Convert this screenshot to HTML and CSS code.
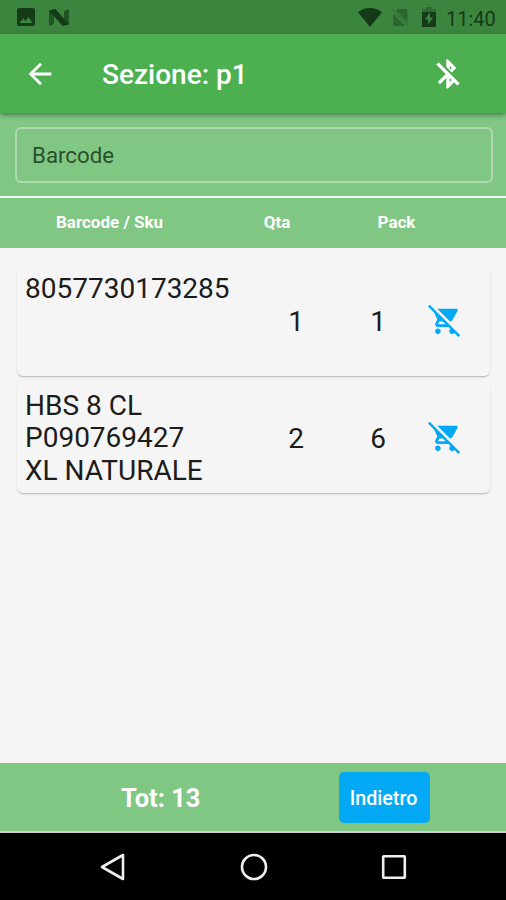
FILE: index.html
```html
<!DOCTYPE html>
<html lang="it">
<head>
<meta charset="utf-8">
<title>Sezione: p1</title>
<link rel="stylesheet" href="styles.css">
</head>
<body>
<svg class="defs" aria-hidden="true">
  <symbol id="cart-off" viewBox="0 0 24 24"><path d="M22.73 22.73L2.77 2.77 2 2l-.73-.73L0 2.54l4.39 4.39 2.21 4.66-1.35 2.45c-.16.28-.25.61-.25.96 0 1.1.9 2 2 2h7.46l1.38 1.38c-.5.36-.83.95-.83 1.62 0 1.1.89 2 1.99 2 .67 0 1.26-.33 1.62-.84L21.46 24l1.27-1.27zM7.42 15c-.14 0-.25-.11-.25-.25l.03-.12.9-1.63h2.36l2 2H7.42zm8.13-2c.75 0 1.41-.41 1.75-1.03l3.58-6.49c.08-.14.12-.31.12-.48 0-.55-.45-1-1-1H6.54l9.01 9zM7 18c-1.1 0-1.99.9-1.99 2S5.9 22 7 22s2-.9 2-2-.9-2-2-2z"/></symbol>
</svg>
<div class="screen">
  <div class="status">
    <svg class="st-photo" viewBox="0 0 18 18"><path fill-rule="evenodd" d="M2 0h14a2 2 0 0 1 2 2v14a2 2 0 0 1-2 2H2a2 2 0 0 1-2-2V2a2 2 0 0 1 2-2zM2.3 15h13.4l-4.2-6-3 4-2.2-2.6z"/></svg>
    <svg class="st-n" viewBox="0 0 20 17"><path opacity=".65" d="M0 1.5l5 3V15l-5 2zM15 2l5-2v15.500l-5-3z"/><path d="M0 1.500L6.500 0 20 15.500 13.500 17z"/></svg>
    <svg class="st-wifi" viewBox="0 0 24 19"><path d="M12 19L0 4.200C3.400 1.500 7.500 0 12 0s8.600 1.500 12 4.200z"/></svg>
    <svg class="st-sim" viewBox="0 0 17 19"><path d="M5.500 1H14q1.500 0 1.500 1.500V14L4 2.500zM1 5.500L13.500 18H2.500Q1 18 1 16.500z"/><path d="M.5 1.500L16.500 17.500" stroke="#215724" stroke-width="1.500"/></svg>
    <svg class="st-bat" viewBox="0 0 14 20"><path opacity=".35" d="M4 0h6v2h4v4H0V2h4z"/><path fill-rule="evenodd" d="M0 5h14v15H0zM8 5L3 12.500h3.200V18L11 10.500H8z"/></svg>
    <span class="clock">11:40</span>
  </div>
  <header class="appbar">
    <svg class="icon" viewBox="0 0 24 24"><path d="M20 11H7.830l5.590-5.590L12 4l-8 8 8 8 1.410-1.410L7.830 13H20v-2z"/></svg>
    <h1 class="title">Sezione: p1</h1>
    <svg class="icon" viewBox="0 0 24 24"><path stroke="#fff" stroke-width=".4" d="M13 5.830l1.880 1.880-1.600 1.600 1.410 1.410 3.020-3.020L12 2h-1v5.030l2 2v-3.200zM5.410 4L4 5.410 10.590 12 5 17.590 6.410 19 11 14.410V22h1l4.290-4.290 2.300 2.290L20 18.590 5.410 4zM13 18.170v-3.760l1.880 1.880L13 18.170z"/></svg>
  </header>
  <div class="search"><div class="field">Barcode</div></div>
  <div class="columns">
    <span>Barcode / Sku</span><span>Qta</span><span>Pack</span>
  </div>
  <main class="list">
    <div class="card">
      <div class="sku">8057730173285</div>
      <div class="num">1</div>
      <div class="num">1</div>
      <svg class="cart"><use href="#cart-off"/></svg>
    </div>
    <div class="card">
      <div class="sku">HBS 8 CL<br>P090769427<br>XL NATURALE</div>
      <div class="num">2</div>
      <div class="num">6</div>
      <svg class="cart"><use href="#cart-off"/></svg>
    </div>
  </main>
  <footer class="total">
    <span class="tot">Tot: 13</span>
    <button class="back">Indietro</button>
  </footer>
  <nav class="nav">
    <svg viewBox="0 0 28 28"><path d="M24 2v24L3 14z"/></svg>
    <svg viewBox="0 0 28 28"><circle cx="14" cy="14" r="12"/></svg>
    <svg viewBox="0 0 28 28"><rect x="3.200" y="3.200" width="21.600" height="21.600" rx=".5"/></svg>
  </nav>
</div>
</body>
</html>
```
FILE: styles.css
```css
* { box-sizing: border-box; }
body { margin: 0; font-family: Roboto, sans-serif; background: #f5f5f5; }
.defs { display: none; }
.screen { width: 506px; height: 900px; display: flex; flex-direction: column; overflow: hidden; }
.screen > * { flex-shrink: 0; }

.status { height: 34px; background: #3c853f; display: flex; align-items: center; padding: 0 11px 0 17px; fill: #153a18; }
.st-photo { width: 18px; height: 18px; }
.st-n { width: 20px; height: 17px; margin-left: 14px; }
.st-wifi { width: 24px; height: 19px; margin-left: auto; }
.st-sim { width: 17px; height: 19px; margin-left: 10px; opacity: .4; }
.st-bat { width: 14px; height: 20px; margin-left: 13px; }
.clock { width: 49px; margin: 3px 0 0 10px; font-size: 20px; line-height: 24px; color: #153a18; white-space: nowrap; }

.appbar { position: relative; height: 79px; background: #4caf50; display: flex; align-items: center; padding: 0 41px 0 23px; box-shadow: 0 2px 5px rgba(0, 0, 0, .4); }
.icon { width: 34px; height: 34px; fill: #fff; }
.title { flex: 1; margin: 2px 0 0 45px; font-size: 28px; font-weight: 500; line-height: 34px; color: #fff; }

.search { height: 83px; background: #81c784; padding: 14px 13px 0 15px; }
.field { height: 56px; border: 2px solid #b0d9b2; border-radius: 6px; padding: 0 15px; font-size: 22.300px; line-height: 52px; color: #29502c; }

.columns { height: 52px; background: #81c784; border-top: 2px solid #f1f8f1; display: grid; grid-template-columns: 219px 116px 123px; align-items: center; text-align: center; font-size: 17px; font-weight: 700; line-height: 20px; padding-bottom: 2px; color: #fff; }

.list { flex: 1; padding: 16px 16px 0 17px; display: flex; flex-direction: column; gap: 5px; }
.card { height: 112px; border-radius: 6px; background: #f5f5f5; box-shadow: 0 2px 2px -1px rgba(0, 0, 0, .22), 0 1px 2px rgba(0, 0, 0, .08); display: grid; grid-template-columns: 230px 82px 82px 1fr; align-items: center; padding: 9px 0 6px 8px; font-size: 28px; line-height: 32.400px; color: #1c1c1c; }
.sku { align-self: start; }
.num { text-align: center; padding-top: 2px; }
.cart { width: 34px; height: 34px; fill: #03a9f4; margin: 0 0 3px 9px; }

.total { height: 70px; background: #81c784; border-bottom: 2px solid #ccc; display: flex; align-items: center; padding-left: 121px; }
.tot { width: 218px; font-size: 25.500px; font-weight: 700; line-height: 30px; padding-top: 2px; color: #fff; }
.back { width: 91px; height: 51px; border: 0; border-radius: 5px; background: #03a9f4; color: #fff; font: 500 19.700px Roboto, sans-serif; padding: 2px 2px 0 0; }

.nav { height: 67px; background: #000; display: flex; align-items: center; justify-content: space-between; padding: 0 98px 0 99px; }
.nav svg { width: 28px; height: 28px; fill: none; stroke: #eee; stroke-width: 2.600; stroke-linejoin: round; }
```
